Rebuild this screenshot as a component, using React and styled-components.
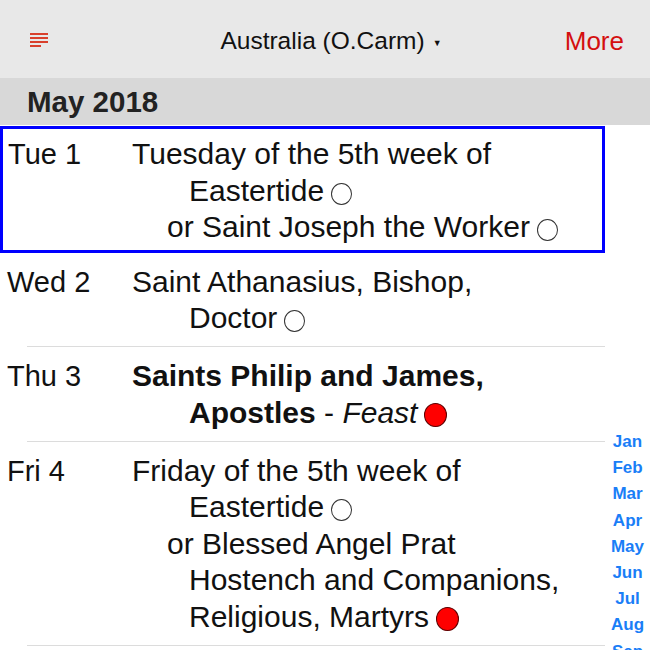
import React from "react";
import styled, { createGlobalStyle } from "styled-components";

const Global = createGlobalStyle`
  html, body { margin: 0; padding: 0; background: #fff; }
  body {
    font-family: "Liberation Sans", Arial, Helvetica, sans-serif;
    color: #111;
    overflow: hidden;
  }
`;

const Screen = styled.div`
  width: 650px;
  height: 650px;
  overflow: hidden;
  display: flex;
  flex-direction: column;
`;

const NavBar = styled.header`
  height: 78px;
  flex: none;
  background: #e8e8e8;
  display: grid;
  grid-template-columns: 120px 1fr 120px;
  align-items: center;
  padding: 4px 26px 0 30px;
  box-sizing: border-box;
`;

const MenuButton = styled.button`
  justify-self: start;
  border: 0;
  background: none;
  padding: 0;
  display: flex;
  margin-top: -2px;
`;

const Title = styled.div`
  justify-self: center;
  font-size: 24.5px;
  color: #111;
  display: flex;
  align-items: center;
  gap: 8px;
  margin-left: 8px;
`;

const Caret = styled.span`
  font-size: 9px;
  margin-top: 3px;
`;

const MoreButton = styled.button`
  justify-self: end;
  border: 0;
  background: none;
  padding: 0;
  font-family: inherit;
  font-size: 26px;
  color: #d40f0f;
`;

const SectionHeader = styled.div`
  height: 47px;
  flex: none;
  background: #d8d8d8;
  display: flex;
  align-items: center;
  padding-left: 27px;
  font-size: 29.5px;
  font-weight: bold;
  color: #222;
`;

const Body = styled.div`
  display: flex;
  flex: 1;
  min-height: 0;
`;

const List = styled.div`
  width: 605px;
  flex: none;
  padding-top: 1px;
`;

const Row = styled.div`
  display: grid;
  grid-template-columns: 125px 1fr;
  padding: 11px 0 10.5px 7px;
  line-height: 36.5px;
  font-size: 30px;
  position: relative;
  box-sizing: border-box;
  ${(p) =>
    p.$selected &&
    `
    border: 3px solid #0000ff;
    padding: 7px 0 4px 5px;
    grid-template-columns: 124px 1fr;
  `}
  ${(p) =>
    p.$divider &&
    `
    &::after {
      content: "";
      position: absolute;
      left: 27px;
      right: 0;
      bottom: 0;
      height: 1px;
      background: #dcdcdc;
    }
  `}
`;

const DayLabel = styled.div`
  white-space: nowrap;
  font-size: 29px;
`;

const Entries = styled.div`
  display: flex;
  flex-direction: column;
  padding-right: 28px;
`;

const Celebration = styled.div`
  padding-left: 57px;
  text-indent: ${(p) => (p.$alt ? "-22px" : "-57px")};
  font-weight: ${(p) => (p.$bold ? "bold" : "normal")};
`;

const Tail = styled.span`
  white-space: nowrap;
`;

const Rank = styled.span`
  font-weight: normal;
  white-space: nowrap;
`;

const RankName = styled.em``;

const Dot = styled.span`
  display: inline-block;
  text-indent: 0;
  width: ${(p) => (p.$red ? "23px" : "21px")};
  height: ${(p) => (p.$red ? "24px" : "22px")};
  border-radius: 50%;
  box-sizing: border-box;
  border: ${(p) => (p.$red ? "1px solid #5a0000" : "1.3px solid #333")};
  background: ${(p) => (p.$red ? "#ff0000" : "#fff")};
  vertical-align: -4px;
  margin-left: 7px;
`;

const IndexColumn = styled.nav`
  flex: 1;
  display: flex;
  flex-direction: column;
  align-items: center;
  padding-top: 304px;
  font-size: 17px;
  font-weight: bold;
  color: #1a7ef7;
  line-height: 26.2px;
`;

const Hamburger = () => (
  <svg width="19" height="16" viewBox="0 0 19 16">
    <g stroke="#d9402c" strokeWidth="2">
      <line x1="0" y1="2" x2="18" y2="2" />
      <line x1="0" y1="6" x2="18" y2="6" />
      <line x1="0" y1="10" x2="18" y2="10" />
      <line x1="0" y1="14" x2="11" y2="14" />
    </g>
  </svg>
);

const months = ["Jan", "Feb", "Mar", "Apr", "May", "Jun", "Jul", "Aug", "Sep", "Oct", "Nov", "Dec"];

export default function App() {
  return (
    <>
      <Global />
      <Screen>
        <NavBar>
          <MenuButton aria-label="Menu">
            <Hamburger />
          </MenuButton>
          <Title>
            Australia (O.Carm) <Caret>▼</Caret>
          </Title>
          <MoreButton>More</MoreButton>
        </NavBar>
        <SectionHeader>May 2018</SectionHeader>
        <Body>
          <List>
            <Row $selected>
              <DayLabel>Tue 1</DayLabel>
              <Entries>
                <Celebration>
                  Tuesday of the 5th week of <Tail>Eastertide<Dot /></Tail>
                </Celebration>
                <Celebration $alt>
                  or Saint Joseph the <Tail>Worker<Dot /></Tail>
                </Celebration>
              </Entries>
            </Row>
            <Row $divider>
              <DayLabel>Wed 2</DayLabel>
              <Entries>
                <Celebration>
                  Saint Athanasius, Bishop, <Tail>Doctor<Dot /></Tail>
                </Celebration>
              </Entries>
            </Row>
            <Row $divider>
              <DayLabel>Thu 3</DayLabel>
              <Entries>
                <Celebration $bold>
                  Saints Philip and James, Apostles{" "}
                  <Rank>
                    - <RankName>Feast</RankName>
                    <Dot $red />
                  </Rank>
                </Celebration>
              </Entries>
            </Row>
            <Row $divider>
              <DayLabel>Fri 4</DayLabel>
              <Entries>
                <Celebration>
                  Friday of the 5th week of <Tail>Eastertide<Dot /></Tail>
                </Celebration>
                <Celebration $alt>
                  or Blessed Angel Prat Hostench and Companions, Religious,{" "}
                  <Tail>Martyrs<Dot $red /></Tail>
                </Celebration>
              </Entries>
            </Row>
          </List>
          <IndexColumn>
            {months.map((m) => (
              <span key={m}>{m}</span>
            ))}
          </IndexColumn>
        </Body>
      </Screen>
    </>
  );
}
